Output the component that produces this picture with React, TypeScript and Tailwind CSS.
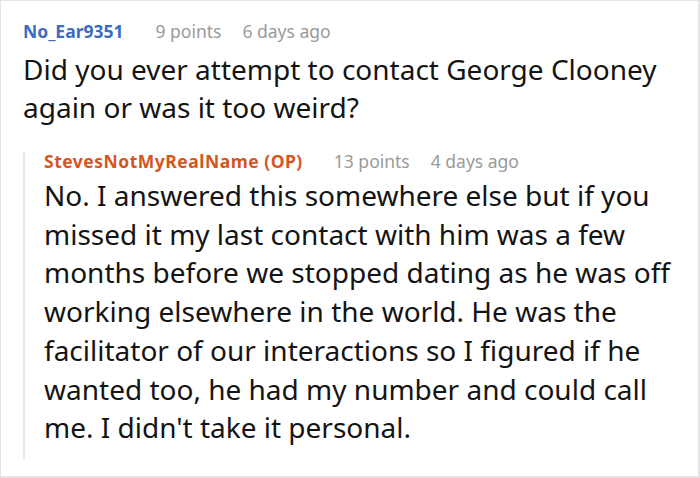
export default function App() {
  const reply = [
    "No. I answered this somewhere else but if you",
    "missed it my last contact with him was a few",
    "months before we stopped dating as he was off",
    "working elsewhere in the world. He was the",
    "facilitator of our interactions so I figured if he",
    "wanted too, he had my number and could call",
    "me. I didn't take it personal.",
  ];

  return (
    <div
      className="w-[700px] h-[478px] bg-white border-t border-l border-r-2 border-b-2 border-[#e4e4e4] overflow-hidden"
      style={{ fontFamily: '"Noto Sans", "Open Sans", sans-serif' }}
    >
      <div className="pl-[22px] pt-[16px]">
        <div className="flex items-baseline text-[17.5px] leading-[28px]">
          <span className="font-bold text-[#3a6cc2]">No_Ear9351</span>
          <span className="ml-[32px] text-[#9a9a9a]">9 points</span>
          <span className="ml-[21px] text-[#9a9a9a]">6 days ago</span>
        </div>
        <p className="mt-[5px] text-[28px] leading-[38px] text-[#141414]">
          Did you ever attempt to contact George Clooney
          <br />
          again or was it too weird?
        </p>

        <div className="mt-[28px] border-l-2 border-[#e8e8e8] pl-[19px] pb-[12px]">
          <div className="-mt-[3px] flex items-baseline text-[17.5px] leading-[20px]">
            <span className="font-bold tracking-[0.5px] text-[#d4561f]">StevesNotMyRealName (OP)</span>
            <span className="ml-[31px] text-[#9a9a9a]">13 points</span>
            <span className="ml-[21px] text-[#9a9a9a]">4 days ago</span>
          </div>
          <p className="mt-[5px] text-[28px] leading-[38.7px] text-[#141414]">
            {reply.map((line) => (
              <span key={line} className="block">
                {line}
              </span>
            ))}
          </p>
        </div>
      </div>
    </div>
  );
}
